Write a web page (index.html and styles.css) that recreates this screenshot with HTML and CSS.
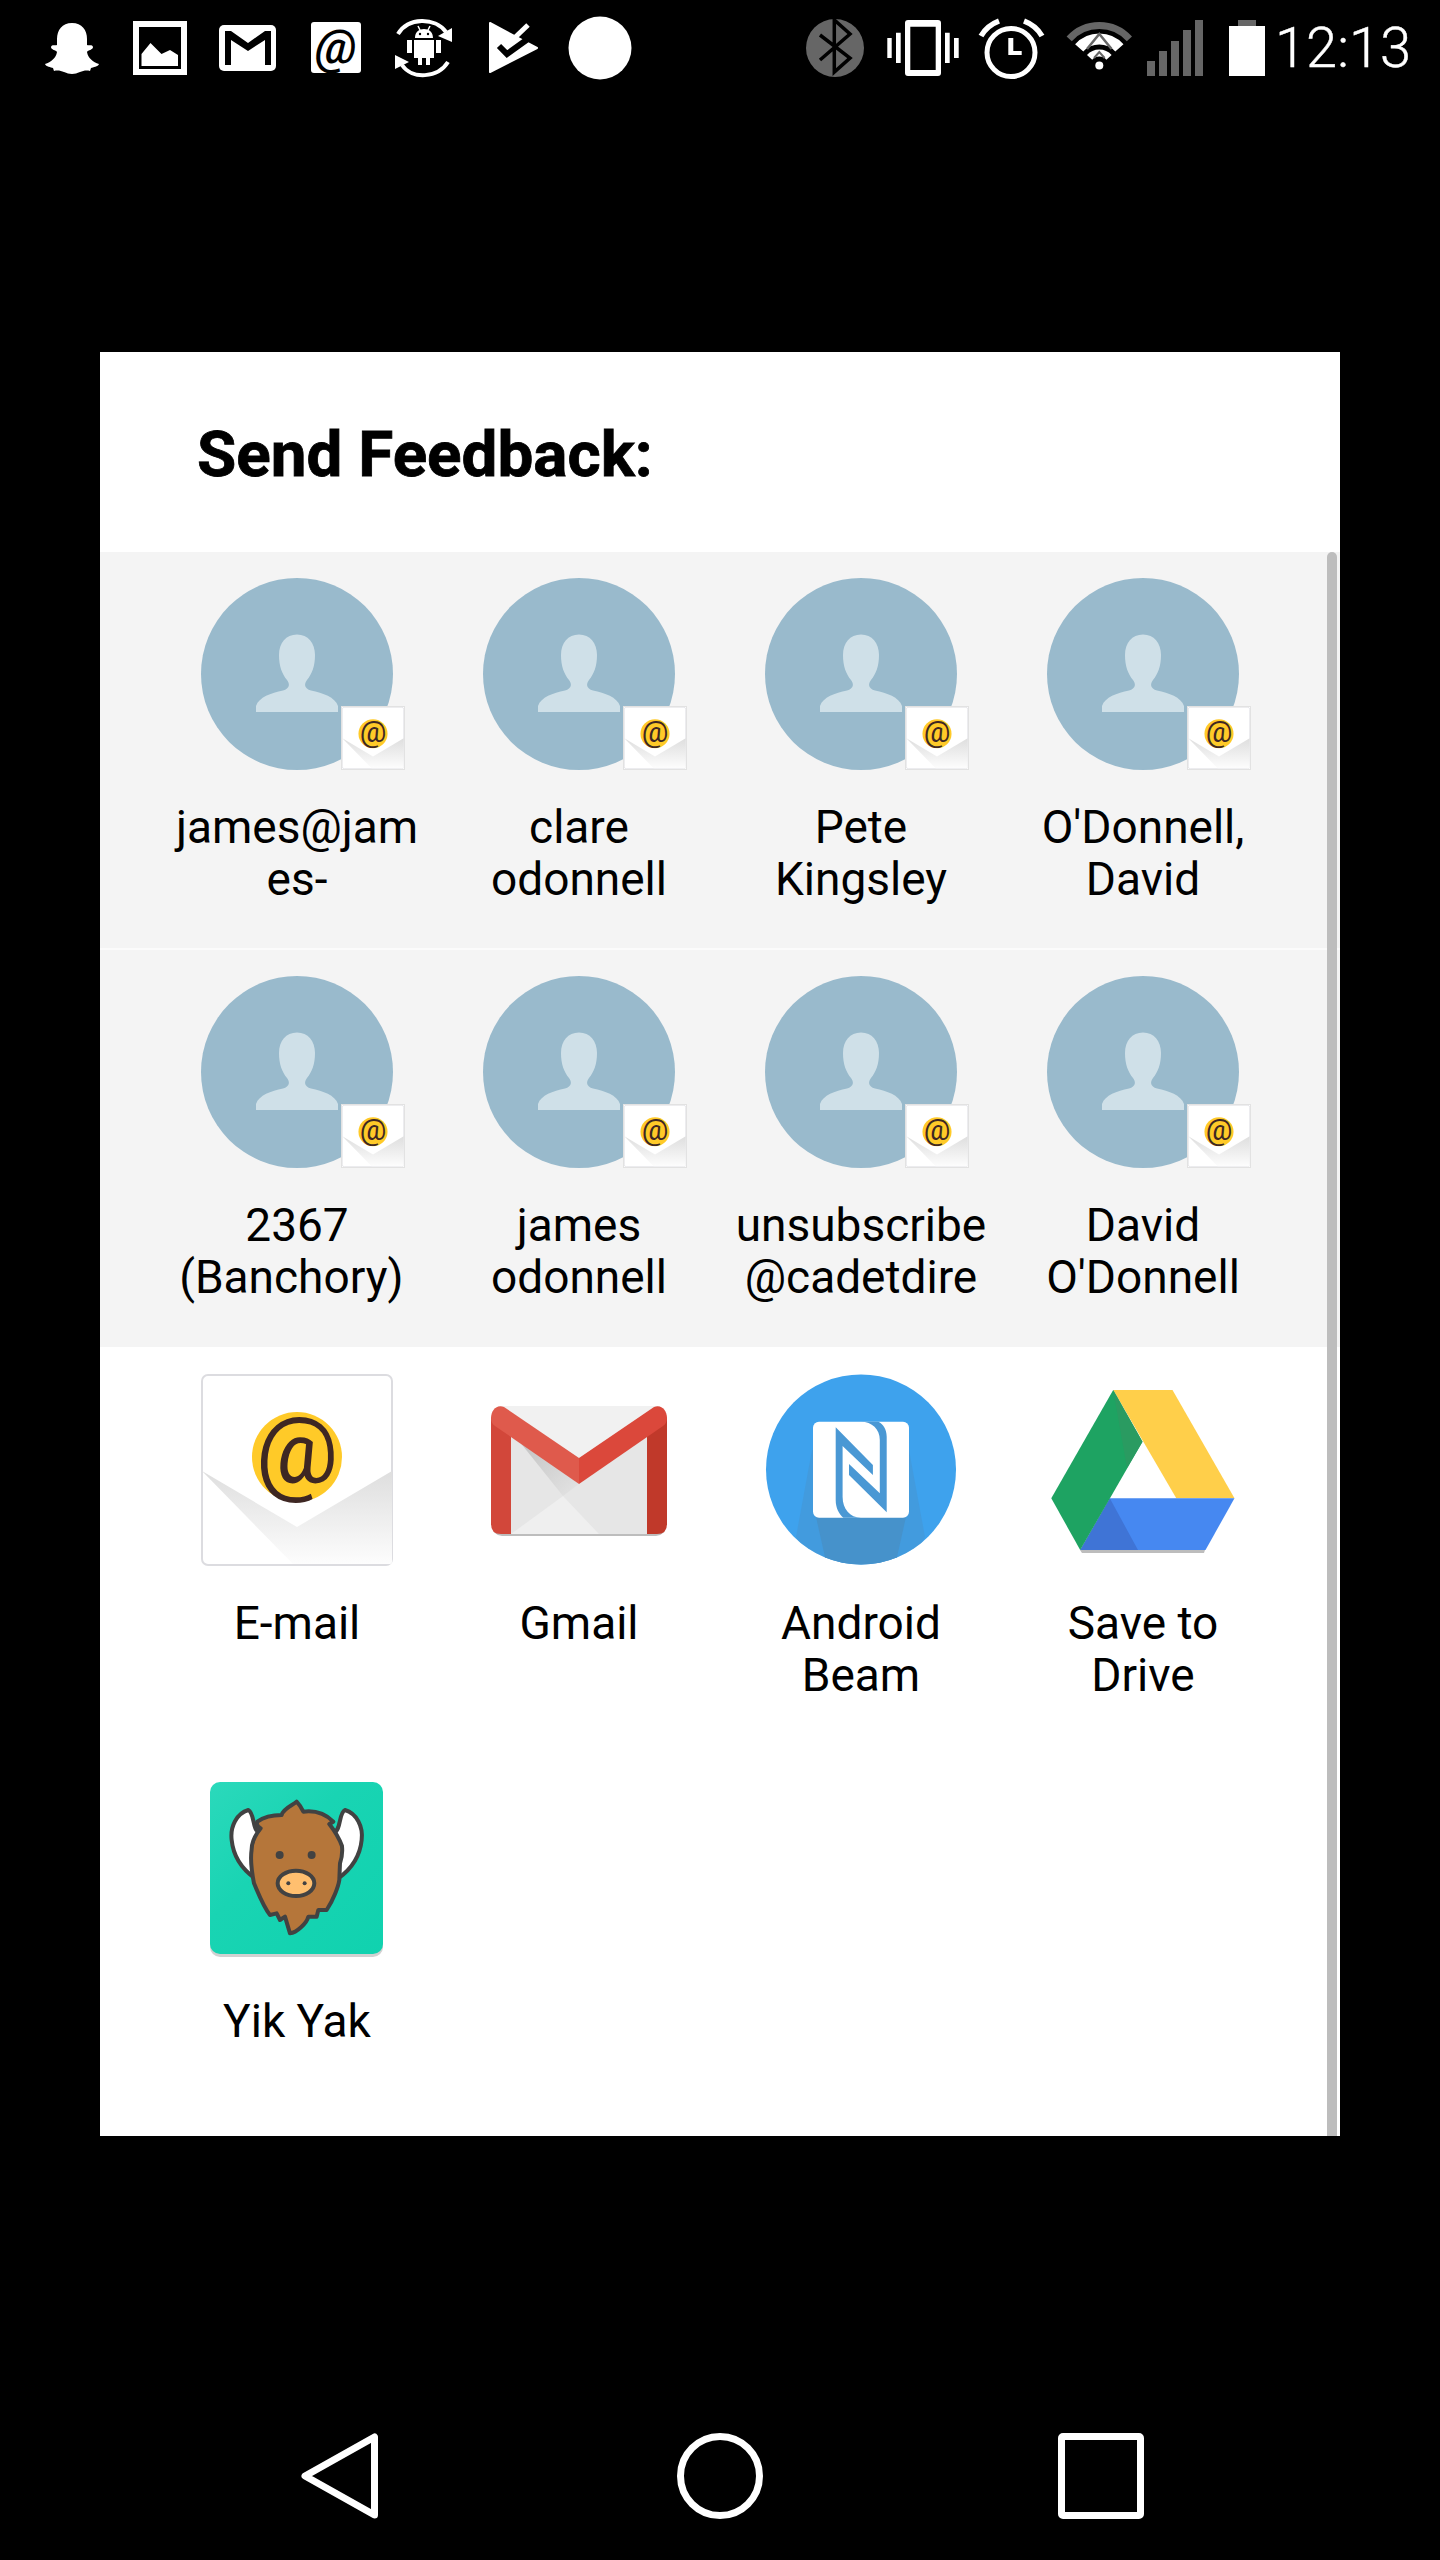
FILE: index.html
```html
<!DOCTYPE html>
<html lang="en">
<head>
<meta charset="utf-8">
<title>Send Feedback</title>
<link rel="stylesheet" href="styles.css">
</head>
<body>
<svg class="defs" aria-hidden="true">
  <defs>
    <linearGradient id="foldGrad" x1="0" y1="0" x2="0" y2="1">
      <stop offset="0" stop-color="#dedede"/>
      <stop offset="1" stop-color="#fdfdfd"/>
    </linearGradient>
    <linearGradient id="tileGrad" x1="0" y1="0" x2="1" y2="1">
      <stop offset="0" stop-color="#2bd9bb"/>
      <stop offset=".4" stop-color="#19d4b3"/>
      <stop offset="1" stop-color="#10d2af"/>
    </linearGradient>
    <linearGradient id="gmailShade" x1="0" y1="0" x2="1" y2="1">
      <stop offset="0" stop-color="#bdbdbd"/>
      <stop offset="1" stop-color="#e4e4e4"/>
    </linearGradient>
    <clipPath id="nfcClip"><circle cx="96" cy="95.5" r="95"/></clipPath>
    <symbol id="person" viewBox="0 0 192 192">
      <circle cx="96" cy="96" r="96" fill="#99bacc"/>
      <path fill="#cfe0e8" d="M55 134V128C58 119 70 115 82 112.500C89 110.500 89 106 86 102C81 96 78 88 78 77C78 65 85 56.500 96 56.500C107 56.500 114 65 114 77C114 88 111 96 106 102C103 106 103 110.500 110 112.500C122 115 134 119 137 128V134Z"/>
    </symbol>
    <symbol id="mail" viewBox="0 0 192 192">
      <rect x="1" y="1" width="190" height="190" rx="6" fill="#fff" stroke="#dcdce0" stroke-width="2"/>
      <path fill="url(#foldGrad)" d="M1 97L96 153L191 97V188Q191 190 189 190H92Z"/>
      <circle cx="96" cy="83" r="45" fill="#ffca28"/>
      <text class="mail-at" x="96" y="108" text-anchor="middle">@</text>
    </symbol>
  </defs>
</svg>

<div class="phone">
  <header class="status">
    <div class="status-left">
      <svg class="slot" viewBox="0 0 88 96"><path fill="#fff" d="M44 23C34 23 29 30 29 39V45C27 46 24 44 23 47C23 50 28 50 29 52C28 58 23 62 17 64C18 67 23 67 25 68L26 71C30 70 33 71 36 72C39 73 41 74 44 74S49 73 52 72C55 71 58 70 62 71L63 68C65 67 70 67 71 64C65 62 60 58 59 52C60 50 65 50 65 47C64 44 61 46 59 45V39C59 30 54 23 44 23Z"/></svg>
      <svg class="slot" viewBox="0 0 88 96"><path fill="#fff" fill-rule="evenodd" d="M17 21H71V75H17ZM23 27V69H65V27Z"/><path fill="#fff" d="M25.500 66V54L34.500 43L45.500 54L54 50L62 55V66Z"/></svg>
      <svg class="slot" viewBox="0 0 88 96"><rect x="15" y="25" width="57" height="46" rx="5" fill="#fff"/><path d="M21 31H27L44 43L61 31H67V65H61V40L44 51L27 40V65H21Z" fill="#000"/></svg>
      <svg class="slot" viewBox="0 0 88 96"><rect x="19" y="22" width="50" height="51" rx="3" fill="#fff"/><text class="status-at" x="44" y="63" text-anchor="middle">@</text></svg>
      <svg class="slot" viewBox="0 0 88 96">
        <path fill="none" stroke="#fff" stroke-width="4" d="M18 34C28 17 55 17 66 32"/>
        <path fill="#fff" d="M72 28V42L58 36Z"/>
        <path fill="none" stroke="#fff" stroke-width="4" d="M68 62C58 78 32 80 22 65"/>
        <path fill="#fff" d="M15 55V69L29 62Z"/>
        <path fill="#fff" d="M35 38C35 32 39 29 44 29S53 32 53 38ZM34 40H54V58H50V65H46V58H42V65H38V58H34ZM27 40H32V53H27ZM56 40H61V53H56Z"/>
        <path stroke="#fff" stroke-width="1.500" d="M38 26L40 30M50 26L48 30"/>
        <circle cx="40" cy="34" r="1.200"/><circle cx="48" cy="34" r="1.200"/>
      </svg>
      <svg class="slot" viewBox="0 0 88 96">
        <path fill="#fff" stroke="#fff" stroke-width="2" stroke-linejoin="round" d="M22 23L69 48L22 72Z"/>
        <path fill="none" stroke="#000" stroke-width="6" d="M31 46L39 54L64 36"/>
        <path fill="none" stroke="#fff" stroke-width="5" d="M38 46L60 25"/>
      </svg>
      <svg class="slot" viewBox="0 0 88 96"><circle cx="44" cy="48" r="31.500" fill="#fff"/></svg>
    </div>
    <div class="status-right">
      <svg class="slot" viewBox="0 0 88 96"><circle cx="44" cy="48" r="29" fill="#666"/><path fill="none" stroke="#000" stroke-width="3.500" d="M29 35L59 58L43.300 72V20L59 34L29 60"/></svg>
      <svg class="slot" viewBox="0 0 88 96"><path fill="#fff" fill-rule="evenodd" d="M29 20H59Q62 20 62 23V73Q62 76 59 76H29Q26 76 26 73V23Q26 20 29 20ZM31.300 26.700V70H56.700V26.700Z"/><path fill="#fff" d="M8.300 38H12.700V58H8.300ZM17 32.700H21.700V63H17ZM66 32.700H70.700V63H66ZM75 38H79.700V58H75Z"/></svg>
      <svg class="slot" viewBox="0 0 88 96"><circle cx="44" cy="52.500" r="24" fill="none" stroke="#fff" stroke-width="5"/><path fill="#fff" d="M41.300 38H46.300V51H54.700V55H41.300Z"/><path fill="none" stroke="#fff" stroke-width="5.500" d="M14 36C18 29 24 24 32 21M57 21C65 24 71 29 75 36"/></svg>
      <svg class="slot" viewBox="0 0 88 96">
        <path fill="none" stroke="#666" stroke-width="7" d="M14.200 38.900A40.500 40.500 0 0 1 74.400 38.900"/>
        <path fill="none" stroke="#fff" stroke-width="11" d="M24.200 47.900A27 27 0 0 1 64.400 47.900"/>
        <path fill="none" stroke="#fff" stroke-width="7" d="M34.600 57.300A13 13 0 0 1 54 57.300"/>
        <path fill="none" stroke="#666" stroke-width="2.500" d="M32 49L44.300 34L56.600 49"/>
        <path fill="none" stroke="#666" stroke-width="2" d="M39 58L44.300 52L49.600 58"/>
        <circle cx="44.300" cy="65.500" r="4" fill="#fff"/>
      </svg>
      <svg class="signal" viewBox="0 0 56 96"><path fill="#666" d="M0 61H8V76H0ZM12 51H20V76H12ZM24 41H32V76H24ZM36 30H44V76H36ZM48 20H56V76H48Z"/></svg>
      <svg class="battery" viewBox="0 0 36 96"><path fill="#666" d="M9 20H27V26H9Z"/><path fill="#fff" d="M0 26H36V76H0Z"/></svg>
      <span class="clock">12:13</span>
    </div>
  </header>

  <main class="dialog">
    <h1 class="title">Send Feedback:</h1>
    <section class="row row-shaded">
      <div class="cell"><div class="avatar"><svg class="icon"><use href="#person"/></svg><svg class="badge"><use href="#mail"/></svg></div><p class="label">james@jam<br>es-</p></div>
      <div class="cell"><div class="avatar"><svg class="icon"><use href="#person"/></svg><svg class="badge"><use href="#mail"/></svg></div><p class="label">clare<br>odonnell</p></div>
      <div class="cell"><div class="avatar"><svg class="icon"><use href="#person"/></svg><svg class="badge"><use href="#mail"/></svg></div><p class="label">Pete<br>Kingsley</p></div>
      <div class="cell"><div class="avatar"><svg class="icon"><use href="#person"/></svg><svg class="badge"><use href="#mail"/></svg></div><p class="label">O'Donnell,<br>David</p></div>
    </section>
    <section class="row row-shaded row-last">
      <div class="cell"><div class="avatar"><svg class="icon"><use href="#person"/></svg><svg class="badge"><use href="#mail"/></svg></div><p class="label">2367<br>(Banchory)&nbsp;</p></div>
      <div class="cell"><div class="avatar"><svg class="icon"><use href="#person"/></svg><svg class="badge"><use href="#mail"/></svg></div><p class="label">james<br>odonnell</p></div>
      <div class="cell"><div class="avatar"><svg class="icon"><use href="#person"/></svg><svg class="badge"><use href="#mail"/></svg></div><p class="label">unsubscribe<br>@cadetdire</p></div>
      <div class="cell"><div class="avatar"><svg class="icon"><use href="#person"/></svg><svg class="badge"><use href="#mail"/></svg></div><p class="label">David<br>O'Donnell</p></div>
    </section>
    <section class="row row-first-app">
      <div class="cell"><svg class="icon" viewBox="0 0 192 192"><use href="#mail"/></svg><p class="label">E-mail</p></div>
      <div class="cell">
        <svg class="icon" viewBox="0 0 192 192">
          <rect x="9" y="34" width="174" height="128" rx="10" fill="#bdbdbd"/>
          <path fill="#e6e6e6" d="M20 32H172V160H20Z"/>
          <path fill="#f1f1f1" d="M14 32H178L96 84Z"/>
          <path fill="url(#gmailShade)" d="M28 57L96 110L80 122Z"/>
          <path fill="#efefef" d="M28 160L80 122L116 160Z"/>
          <path fill="#d2473a" d="M8 44Q10 42 14 44L28 57V150V160H18Q8 160 8 150Z"/>
          <path fill="#c0392a" d="M184 44Q182 42 178 44L164 57V160H174Q184 160 184 150Z"/>
          <path fill="#df5a4c" d="M8 44C8 36 14 30 21 33L96 84V110L12 52Q8 49 8 44Z"/>
          <path fill="#db483b" d="M184 44C184 36 178 30 171 33L96 84V110L180 52Q184 49 184 44Z"/>
        </svg>
        <p class="label">Gmail</p>
      </div>
      <div class="cell">
        <svg class="icon" viewBox="0 0 192 192">
          <circle cx="96" cy="95.500" r="95" fill="#3ea2ed"/>
          <g clip-path="url(#nfcClip)">
            <path fill="#4692cb" fill-opacity=".45" d="M47 76H144L160 163L145 192H47L31 163Z"/>
            <path fill="#4692cb" d="M51 143H141L130 192H62Z"/>
          </g>
          <rect x="48" y="47.700" width="96" height="96" rx="6" fill="#fff"/>
          <path fill="#4a98d4" d="M70.700 53.300L107.900 91V101L77.600 72V122.700C77.600 135 85 143.700 96 143.700H78.300C74 140 70.700 134 70.700 126Z"/>
          <path fill="#4a98d4" d="M84 90L114.800 119.300V66C114.800 55 107 47.700 96 47.700H113.400C118 50 121.700 55 121.700 62.700V138.300L84 101Z"/>
        </svg>
        <p class="label">Android<br>Beam</p>
      </div>
      <div class="cell">
        <svg class="icon" viewBox="0 0 192 192">
          <path fill="#bdbdbd" d="M33 176H158L157 179H35Z"/>
          <path fill="#ffcf4a" d="M66.200 16H125.500L187.500 124.300H129.300Z"/>
          <path fill="#4688f1" d="M62.800 124.300H187.500L158.500 176H33.200Z"/>
          <path fill="#3f74d6" d="M62.800 124.300L91 176H33.200Z"/>
          <path fill="#1ea362" d="M66.200 16L4.300 124.300L33.200 176L95.500 67.700Z"/>
          <path fill="#2a9b61" d="M66.200 16L95.500 67.700L80 94Z"/>
        </svg>
        <p class="label">Save to<br>Drive</p>
      </div>
    </section>
    <section class="row">
      <div class="cell">
        <svg class="icon" viewBox="0 0 192 192">
          <rect x="9" y="13" width="173" height="172" rx="10" fill="#000" fill-opacity=".18"/>
          <rect x="9" y="10" width="173" height="172" rx="10" fill="url(#tileGrad)"/>
          <g transform="translate(-21 -12) scale(.3333)" stroke="#424242" stroke-width="12" stroke-linejoin="round">
            <path fill="#fff" d="M205 150C170 160 150 200 155 240C160 290 190 330 225 355L240 220C215 210 225 160 205 150Z"/>
            <path fill="#fff" d="M495 150C530 160 550 200 545 240C540 290 510 330 475 355L460 220C485 210 475 160 495 150Z"/>
            <path fill="#b5763a" d="M350 125C340 135 310 145 305 165C280 165 250 172 232 185C228 195 235 202 242 205C226 225 215 250 215 268C210 300 216 340 222 370C235 400 250 440 270 465L290 460L300 480L315 470L330 520C350 518 380 490 385 470L410 470L415 450L440 450C460 420 475 380 478 360L480 310C490 280 486 265 486 258C476 230 458 205 448 192L460 185C440 165 410 150 370 155C365 145 360 135 350 125Z"/>
            <ellipse cx="348" cy="370" rx="55" ry="38" fill="#ffbf6f"/>
          </g>
          <g fill="#424242" transform="translate(-21 -12) scale(.3333)">
            <circle cx="299" cy="285" r="12"/><circle cx="395" cy="285" r="12"/>
            <circle cx="325" cy="370" r="6"/><circle cx="374" cy="370" r="6"/>
          </g>
        </svg>
        <p class="label">Yik Yak</p>
      </div>
    </section>
    <div class="scrollbar"></div>
  </main>

  <nav class="nav">
    <svg class="nav-icon" viewBox="0 0 86 86"><path fill="none" stroke="#fff" stroke-width="7" stroke-linejoin="round" d="M9 43L78.500 4V82Z"/></svg>
    <svg class="nav-icon" viewBox="0 0 86 86"><circle cx="43" cy="43" r="39.500" fill="none" stroke="#fff" stroke-width="7"/></svg>
    <svg class="nav-icon" viewBox="0 0 86 86"><rect x="3.500" y="3.500" width="79" height="79" rx="1.500" fill="none" stroke="#fff" stroke-width="7"/></svg>
  </nav>
</div>
</body>
</html>
```

FILE: styles.css
```css
* { box-sizing: border-box; }

html, body {
  margin: 0;
  padding: 0;
  background: #000;
}

.defs {
  position: absolute;
  width: 0;
  height: 0;
}

.phone {
  width: 1440px;
  height: 2560px;
  overflow: hidden;
  display: flex;
  flex-direction: column;
  background: #000;
  font-family: Roboto, "Liberation Sans", sans-serif;
}

.status {
  height: 96px;
  flex: none;
  display: flex;
  align-items: center;
}

.status-left {
  display: flex;
  padding-left: 28px;
}

.status-right {
  display: flex;
  align-items: center;
  margin-left: 147px;
}

.slot {
  width: 88px;
  height: 96px;
  flex: none;
}

.signal {
  width: 56px;
  height: 96px;
  margin-left: 4px;
  flex: none;
}

.battery {
  width: 36px;
  height: 96px;
  margin-left: 26px;
  flex: none;
}

.clock {
  margin-left: 10px;
  color: #fff;
  font-size: 56px;
  font-weight: 300;
  line-height: 96px;
  white-space: nowrap;
  -webkit-text-stroke: 0.4px #fff;
}

.status-at {
  font-family: Roboto, sans-serif;
  font-size: 48px;
  font-style: italic;
  font-weight: 500;
  fill: #000;
}

.mail-at {
  font-family: Roboto, sans-serif;
  font-size: 92px;
  font-weight: 400;
  fill: #3e2723;
}

.dialog {
  position: relative;
  flex: none;
  width: 1240px;
  height: 1784px;
  margin: 256px 0 0 100px;
  overflow: hidden;
  background: #fff;
}

.title {
  height: 200px;
  margin: 0;
  padding-left: 97px;
  font-size: 63.800px;
  font-weight: 700;
  line-height: 206px;
  color: #000;
  -webkit-text-stroke: 0.8px #000;
}

.row {
  display: grid;
  grid-template-columns: repeat(4, 282px);
  height: 398px;
  padding: 26px 0 0 56px;
}

.row-shaded {
  background: #f4f4f4;
  border-bottom: 2px solid #fbfbfb;
}

.row-last {
  height: 397px;
  border-bottom: 0;
}

.row-first-app {
  height: 399px;
  padding-top: 27px;
}

.cell {
  display: flex;
  flex-direction: column;
  align-items: center;
}

.avatar {
  position: relative;
  width: 192px;
  height: 192px;
}

.icon {
  display: block;
  width: 192px;
  height: 192px;
  flex: none;
}

.badge {
  position: absolute;
  left: 140px;
  top: 128px;
  width: 64px;
  height: 64px;
  border: 1px solid #e2e2e2;
  background: #fff;
}

.label {
  margin: 31px 0 0;
  font-size: 46px;
  line-height: 52px;
  color: #000;
  text-align: center;
  white-space: nowrap;
}

.scrollbar {
  position: absolute;
  top: 200px;
  right: 3px;
  bottom: 0;
  width: 10px;
  border-radius: 5px 5px 0 0;
  background: #bdbdbd;
}

.nav {
  flex: 1;
  display: flex;
  justify-content: center;
  gap: 295px;
  margin-top: 297px;
}

.nav-icon {
  width: 86px;
  height: 86px;
  flex: none;
}
```
